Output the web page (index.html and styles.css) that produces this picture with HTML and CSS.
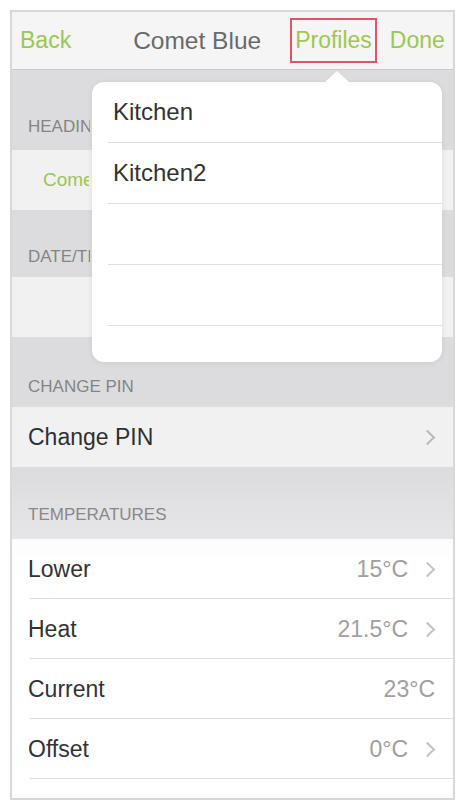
FILE: index.html
```html
<!DOCTYPE html>
<html>
<head>
<meta charset="utf-8">
<link rel="stylesheet" href="styles.css">
</head>
<body>
<div class="frame">
  <div class="nav">
    <span class="nav-link back">Back</span>
    <span class="title">Comet Blue</span>
    <span class="nav-link profiles">Profiles</span>
    <span class="nav-link done">Done</span>
  </div>
  <div class="content">
    <div class="header h1"><span class="clip">HEADING</span></div>
    <div class="row"><span class="green clip">Comet Blue</span></div>
    <div class="header h2"><span class="clip">DATE/TIME</span></div>
    <div class="row"></div>
    <div class="header h3">CHANGE PIN</div>
    <div class="row"><span class="label">Change PIN</span><span class="chev"></span></div>
    <div class="header h4">TEMPERATURES</div>
    <div class="list">
      <div class="row sep"><span class="label">Lower</span><span class="value">15°C</span><span class="chev"></span></div>
      <div class="row sep"><span class="label">Heat</span><span class="value">21.5°C</span><span class="chev"></span></div>
      <div class="row sep"><span class="label">Current</span><span class="value last">23°C</span></div>
      <div class="row sep"><span class="label">Offset</span><span class="value">0°C</span><span class="chev"></span></div>
    </div>
    <div class="dim"></div>
  </div>
  <div class="popover">
    <div class="arrow"></div>
    <div class="pop-row">Kitchen</div>
    <div class="pop-row">Kitchen2</div>
    <div class="pop-row"></div>
    <div class="pop-row"></div>
    <div class="pop-row"></div>
  </div>
</div>
</body>
</html>
```

FILE: styles.css
```css
html, body {
  margin: 0;
  padding: 0;
  background: #ffffff;
}

body {
  font-family: "Liberation Sans", Arial, sans-serif;
}

.frame {
  position: relative;
  box-sizing: border-box;
  margin: 10px 0 0 10px;
  width: 445px;
  height: 790px;
  border: 2px solid #d8d8d8;
  display: flex;
  flex-direction: column;
  overflow: hidden;
  background: #e9e9eb;
}

.nav {
  height: 57px;
  flex: none;
  display: flex;
  align-items: center;
  padding-left: 8px;
  background: #f5f5f5;
  border-bottom: 1px solid #c9c9c9;
  font-size: 23px;
}

.nav-link {
  color: #9ac850;
}

.title {
  margin-left: 62px;
  font-size: 24.5px;
  color: #6a6a6a;
}

.profiles {
  margin-left: 29px;
  padding: 8px 3px 9px 3px;
  border: 2px solid #e25468;
  line-height: 24px;
}

.done {
  margin-left: 13px;
}

.content {
  position: relative;
  flex: 1;
  display: flex;
  flex-direction: column;
}

.header {
  box-sizing: border-box;
  display: flex;
  align-items: flex-end;
  padding-left: 16px;
  font-size: 17px;
  line-height: 20px;
  color: #8c8c8c;
}

.clip {
  display: inline-block;
  max-width: 62px;
  overflow: hidden;
  white-space: nowrap;
}

.h1 { height: 80px; padding-bottom: 13px; }
.h2 { height: 67px; padding-bottom: 10px; }
.h3 { height: 70px; padding-bottom: 10px; }
.h4 { height: 72px; padding-bottom: 14px; }

.row {
  box-sizing: border-box;
  height: 60px;
  display: flex;
  align-items: center;
  padding: 0 18px 0 16px;
  background: #ffffff;
  font-size: 23px;
  color: #333333;
}

.green {
  margin-left: 15px;
  color: #a5cf5c;
  font-size: 19px;
}

.green.clip {
  max-width: 46px;
}

.label {
  flex: 1;
}

.value {
  color: #a0a0a0;
}

.chev {
  width: 9px;
  height: 9px;
  margin-left: 14px;
  margin-right: 2px;
  border-top: 2px solid #c4c4c4;
  border-right: 2px solid #c4c4c4;
  transform: rotate(45deg);
}

.list {
  flex: 1;
  background: #ffffff;
}

.row.sep {
  position: relative;
}

.row.sep::after {
  content: "";
  position: absolute;
  left: 18px;
  right: 0;
  bottom: 0;
  height: 1px;
  background: #dedede;
}

.dim {
  position: absolute;
  left: 0;
  top: 0;
  right: 0;
  bottom: 0;
  pointer-events: none;
  background: linear-gradient(to bottom, rgba(0,0,0,0.055) 0px, rgba(0,0,0,0.055) 400px, rgba(0,0,0,0) 490px);
}

.popover {
  position: absolute;
  left: 80px;
  top: 70px;
  width: 350px;
  height: 280px;
  background: #ffffff;
  border-radius: 12px;
  box-shadow: 0 1px 6px rgba(0,0,0,0.08);
}

.arrow {
  position: absolute;
  left: 232px;
  top: -11px;
  width: 0;
  height: 0;
  border-left: 13px solid transparent;
  border-right: 13px solid transparent;
  border-bottom: 12px solid #ffffff;
}

.pop-row {
  box-sizing: border-box;
  height: 61px;
  margin-left: 16px;
  padding-left: 5px;
  display: flex;
  align-items: center;
  font-size: 24px;
  color: #333333;
  border-bottom: 1px solid #e0e0e0;
}

.pop-row:last-child {
  border-bottom: none;
}
```
